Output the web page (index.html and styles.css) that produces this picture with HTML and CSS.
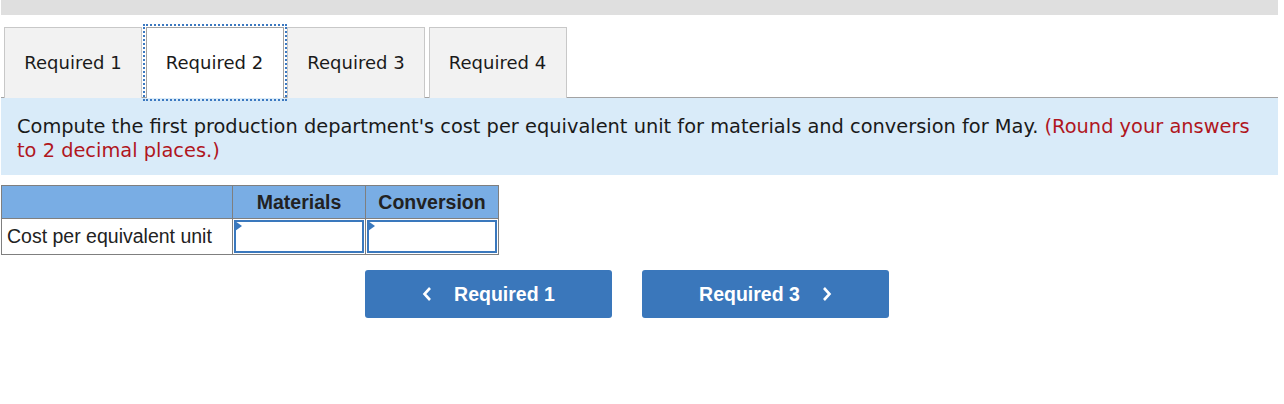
FILE: index.html
```html
<!DOCTYPE html>
<html>
<head>
<meta charset="utf-8">
<link rel="stylesheet" href="styles.css">
</head>
<body>
<div class="page">
  <div class="topbar"></div>
  <div class="tabs">
    <div class="tab">Required 1</div>
    <div class="tab active">Required 2</div>
    <div class="tab">Required 3</div>
    <div class="tab">Required 4</div>
  </div>
  <p class="instruction"><span class="prompt">Compute the first production department's cost per equivalent unit for materials and conversion for May.</span> <span class="note">(Round your answers</span> <span class="note">to 2 decimal places.)</span></p>
  <table class="grid">
    <thead>
      <tr><th class="label-col"></th><th class="val-col">Materials</th><th class="val-col">Conversion</th></tr>
    </thead>
    <tbody>
      <tr>
        <td class="label">Cost per equivalent unit</td>
        <td class="input-cell"><div class="field"><span class="flag"></span></div></td>
        <td class="input-cell"><div class="field"><span class="flag"></span></div></td>
      </tr>
    </tbody>
  </table>
  <div class="nav">
    <button class="navbtn"><svg class="chev" width="10" height="16" viewBox="0 0 10 16"><path d="M8 2 L2.5 8 L8 14" fill="none" stroke="#fff" stroke-width="2.6"/></svg><span>Required 1</span></button>
    <button class="navbtn"><span>Required 3</span><svg class="chev" width="10" height="16" viewBox="0 0 10 16"><path d="M2 2 L7.5 8 L2 14" fill="none" stroke="#fff" stroke-width="2.6"/></svg></button>
  </div>
</div>
</body>
</html>
```

FILE: styles.css
```css
html, body {
  margin: 0;
  padding: 0;
  background: #ffffff;
}

.page {
  width: 1277px;
  margin-left: 1px;
}

.topbar {
  height: 15px;
  background: #dfdfdf;
}

.tabs {
  display: flex;
  gap: 3.5px;
  padding-left: 3px;
  margin-top: 12px;
  border-bottom: 1px solid #a3a3a3;
  height: 70px;
}

.tab {
  box-sizing: border-box;
  width: 138px;
  height: 71px;
  border: 1px solid #c8c8c8;
  border-bottom: none;
  background: #f2f2f2;
  display: flex;
  align-items: center;
  justify-content: center;
  padding-bottom: 1px;
  font-family: "DejaVu Sans", Verdana, sans-serif;
  font-size: 18px;
  color: #1a1a1a;
}

.tab.active {
  background: #ffffff;
  border-color: #a3a3a3;
  outline: 2px dotted #3b78c0;
  outline-offset: 1px;
  position: relative;
  z-index: 1;
}

.instruction {
  margin: 0;
  background: #d9ebf9;
  padding: 17px 12px 12px 16px;
  font-family: "DejaVu Sans", Verdana, sans-serif;
  font-size: 19.4px;
  line-height: 24px;
  color: #1a1a1a;
}

.note {
  color: #b0161e;
}

.grid {
  margin-top: 10px;
  border-collapse: collapse;
  font-family: "Liberation Sans", Arial, sans-serif;
  font-size: 19.5px;
}

.grid th {
  background: #79ade4;
  border: 1px solid #7f7f7f;
  height: 32px;
  padding: 0;
  font-weight: bold;
  color: #222;
  text-align: center;
}

.label-col { width: 230px; }
.val-col { width: 132px; }

.grid td {
  border: 1px solid #7f7f7f;
  height: 33px;
  padding: 0;
}

.grid td.label {
  padding-left: 5px;
  color: #222;
  text-align: left;
}

.grid td.input-cell {
  padding: 1px;
}

.field {
  position: relative;
  box-sizing: border-box;
  height: 33px;
  border: 2px solid #3a78bd;
  background: #fff;
}

.flag {
  position: absolute;
  left: -1px;
  top: -1px;
  width: 0;
  height: 0;
  border-top: 5px solid transparent;
  border-bottom: 5px solid transparent;
  border-left: 7px solid #3a78bd;
}

.nav {
  display: flex;
  gap: 30px;
  margin-top: 15px;
  padding-left: 364px;
}

.navbtn {
  width: 247px;
  height: 48px;
  border: none;
  border-radius: 3px;
  background: #3a77bb;
  color: #fff;
  font-family: "Liberation Sans", Arial, sans-serif;
  font-weight: bold;
  font-size: 19.5px;
  display: flex;
  align-items: center;
  justify-content: center;
  gap: 22px;
  padding: 0;
}

.chev {
  display: block;
}
```
